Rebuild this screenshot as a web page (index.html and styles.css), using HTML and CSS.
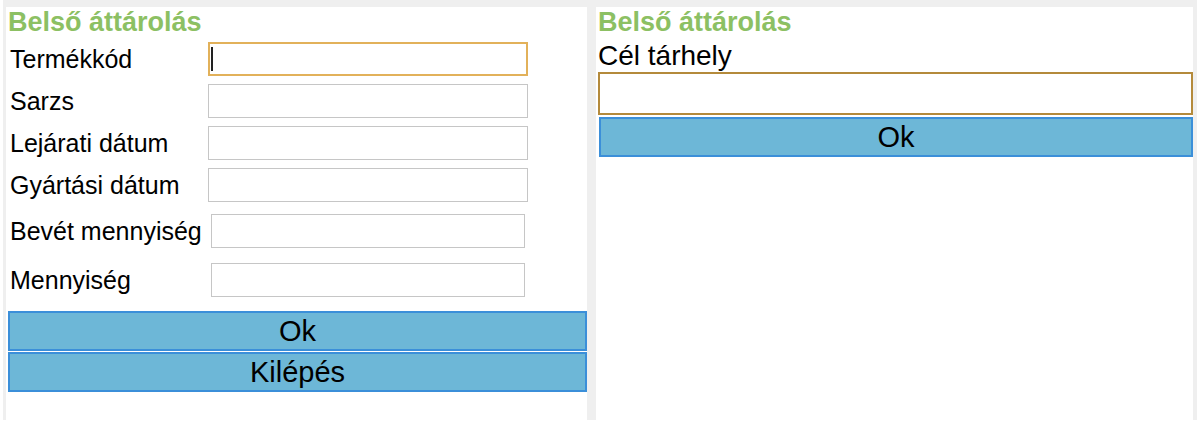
FILE: index.html
```html
<!DOCTYPE html>
<html lang="hu">
<head>
  <meta charset="UTF-8" />
  <meta name="viewport" content="width=device-width, initial-scale=1.0"/>
  <title>Belső áttárolás</title>
  <link rel="stylesheet" href="styles.css">
</head>
<body>
  <main class="screen">
    <section class="panel">
      <h1 class="title">Belső áttárolás</h1>
      <div class="fields">
        <label class="field-label" for="cikk">Termékkód</label>
        <div class="focus-wrap">
          <input class="field-input is-focused" id="cikk" type="text">
          <span class="caret"></span>
        </div>
        <label class="field-label" for="sarzs">Sarzs</label>
        <input class="field-input" id="sarzs" type="text">
        <label class="field-label" for="lejarat">Lejárati dátum</label>
        <input class="field-input" id="lejarat" type="text">
        <label class="field-label" for="gyartas">Gyártási dátum</label>
        <input class="field-input" id="gyartas" type="text">
      </div>
      <div class="fields fields-qty">
        <label class="field-label" for="bevet">Bevét mennyiség</label>
        <input class="field-input" id="bevet" type="text">
        <label class="field-label" for="menny">Mennyiség</label>
        <input class="field-input" id="menny" type="text">
      </div>
      <div class="actions">
        <button class="btn" type="button">Ok</button>
        <button class="btn" type="button">Kilépés</button>
      </div>
    </section>
    <section class="panel panel-right">
      <h1 class="title">Belső áttárolás</h1>
      <label class="target-label" for="cel">Cél tárhely</label>
      <input class="target-input" id="cel" type="text">
      <button class="btn btn-target" type="button">Ok</button>
    </section>
  </main>
</body>
</html>
```
FILE: styles.css
```css
*{margin:0;padding:0;box-sizing:border-box}
html,body{background:#fff;font-family:'Liberation Sans',Arial,sans-serif;color:#000}
.screen{margin:0 4px 0 3px;height:420px;background:#efefef;padding:7px 4px 0 3px;display:grid;grid-template-columns:581px 597px;column-gap:9px}
.panel{background:#fff;padding-left:2px;display:flex;flex-direction:column}
.title{font-size:27px;font-weight:bold;color:#8cc063;line-height:30px;height:30px}

.fields{display:grid;grid-template-columns:200px 320px;row-gap:8px;align-items:center;margin-top:5px}
.fields-qty{grid-template-columns:203px 314px;row-gap:15px;margin-top:12px}
.field-label{font-size:25px;padding-left:2px;line-height:28px}
.field-input{display:block;width:100%;height:34px;border:1px solid #c6c6c6;background:#fff;font:inherit;outline:none}
.field-input.is-focused{border:2px solid #e2b15a}
.focus-wrap{position:relative}
.caret{position:absolute;left:3px;top:5px;width:2px;height:24px;background:#222}

.actions{display:flex;flex-direction:column;gap:1px;margin-top:14px}
.btn{display:block;width:100%;height:40px;background:#6db7d7;border:2px solid #3b8fd9;font-family:inherit;font-size:29px;color:#000;line-height:34px;cursor:pointer}

.target-label{font-size:28px;line-height:32px;margin-top:3px}
.target-input{display:block;width:100%;height:43px;border:2px solid #b48a3b;background:#fff;outline:none;font:inherit}
.btn-target{height:40px;margin-top:2px;margin-left:1px;width:calc(100% - 1px)}
```
